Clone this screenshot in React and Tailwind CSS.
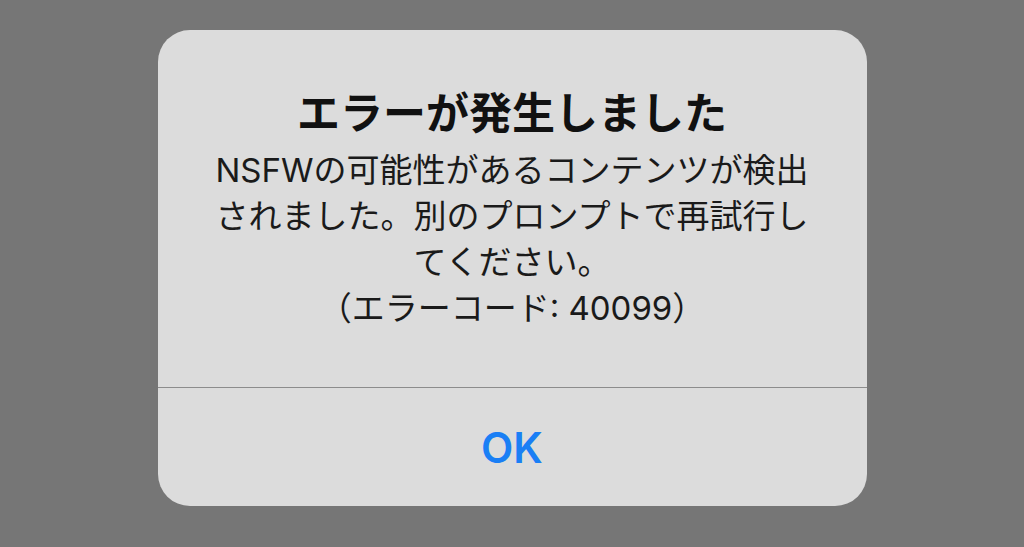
export default function App() {
  return (
    <div className="flex h-[547px] w-full justify-center bg-[#767676] pt-[30px]" style={{ fontFamily: '"Inter", "Noto Sans CJK JP", sans-serif' }}>
      <div className="flex h-[476px] w-[709px] flex-col overflow-hidden rounded-[32px] bg-[#dcdcdc]">
        {/* Message */}
        <div className="flex flex-1 flex-col items-center pt-[54px] text-center">
          <h1 className="text-[43px] font-semibold leading-[52px] text-[#111]" style={{ fontFamily: '"Noto Sans CJK JP", sans-serif' }}>
            エラーが発生しました
          </h1>
          <p className="mt-[11px] text-[33px] leading-[46px] text-[#1a1a1a]">
            NSFWの可能性があるコンテンツが検出
            <br />
            されました。別のプロンプトで再試行し
            <br />
            てください。
            <br />
            （エラーコード: 40099）
          </p>
        </div>

        {/* Action */}
        <button className="h-[119px] w-full border-t border-[#8c8c8c] text-[42px] font-semibold text-[#1a7ff5]">
          OK
        </button>
      </div>
    </div>
  );
}
